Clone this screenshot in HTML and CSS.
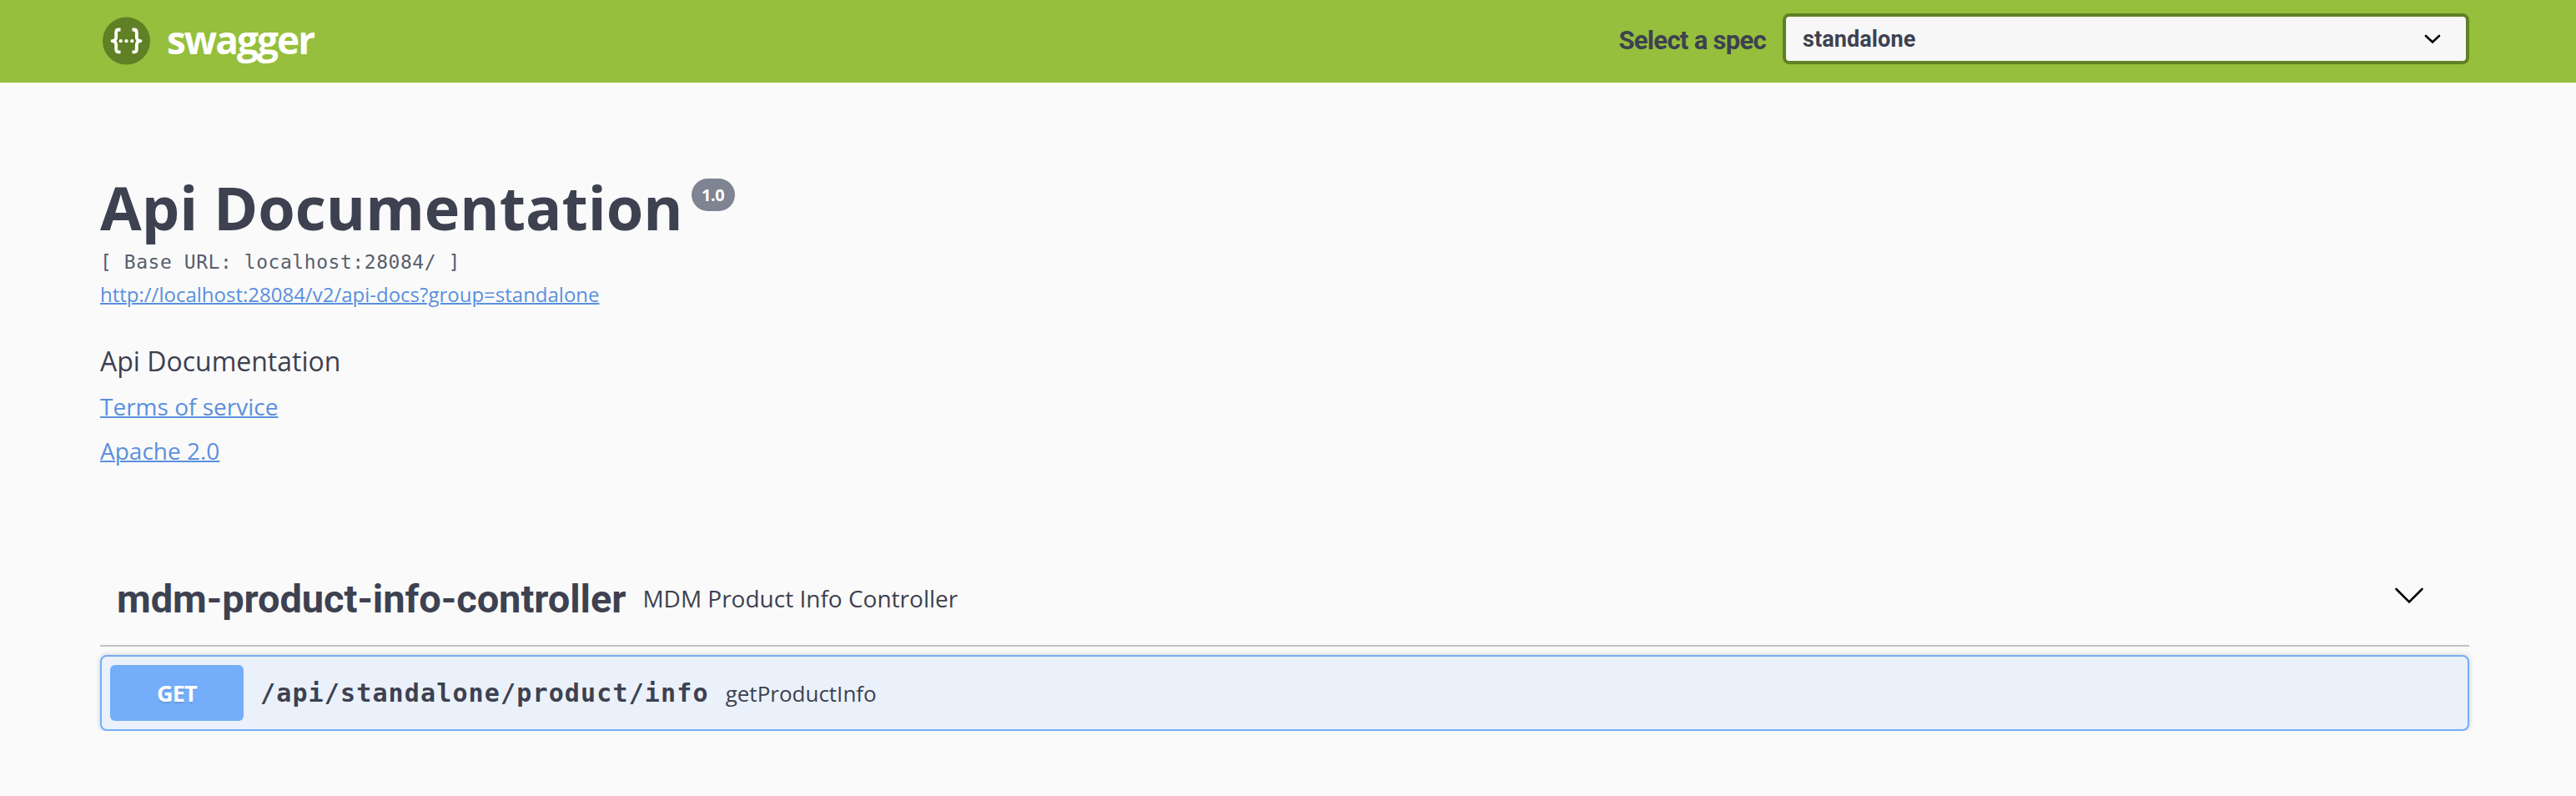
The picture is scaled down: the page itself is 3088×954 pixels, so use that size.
FILE: index.html
```
<!DOCTYPE html>
<html lang="en">
<head>
    <meta charset="utf-8">
    <title>Swagger UI</title>
    <link rel="stylesheet" href="styles.css">
</head>
<body>
    <!-- Top bar -->
    <header class="topbar">
        <a class="logo">
            <svg class="logo-icon" width="60" height="60" viewBox="0 0 60 60">
                <circle cx="31.5" cy="30" r="28.5" fill="#5f8025"/>
                <g fill="none" stroke="#fff" stroke-width="3.8" stroke-linejoin="round">
                    <path d="M24.5 16.500h-2q-3.300 0-3.300 3.500v5.500q0 4.300-4.700 4.700q4.700.400 4.700 4.700v5q0 3.500 3.300 3.500h2"/>
                    <path d="M38.5 16.500h2q3.300 0 3.300 3.500v5.500q0 4.300 4.700 4.700q-4.700.400-4.700 4.700v5q0 3.500-3.300 3.500h-2"/>
                </g>
                <g fill="#fff">
                    <circle cx="24.7" cy="30.2" r="2.1"/>
                    <circle cx="31.5" cy="30.2" r="2.1"/>
                    <circle cx="38.3" cy="30.2" r="2.1"/>
                </g>
            </svg>
            <span class="logo-text">swagger</span>
        </a>
        <label class="spec-select">
            <span class="spec-label">Select a spec</span>
            <span class="select">
                <span class="select-value">standalone</span>
                <svg width="20" height="12" viewBox="0 0 20 12"><path d="M2 2l8 7.500l8-7.500" fill="none" stroke="#000" stroke-width="2.6" stroke-linecap="round"/></svg>
            </span>
        </label>
    </header>

    <!-- Api info -->
    <section class="info">
        <h2 class="title"><span class="title-text">Api Documentation</span><span class="version">1.0</span></h2>
        <pre class="base-url">[ Base URL: localhost:28084/ ]</pre>
        <a class="link docs-link">http://localhost:28084/v2/api-docs?group=standalone</a>
        <p class="description">Api Documentation</p>
        <a class="link">Terms of service</a>
        <a class="link">Apache 2.0</a>
    </section>

    <!-- Operations -->
    <section class="tag-section">
        <div class="tag">
            <span class="tag-name">mdm-product-info-controller</span>
            <span class="tag-description">MDM Product Info Controller</span>
            <svg class="tag-arrow" width="36" height="20" viewBox="0 0 36 20"><path d="M2.500 2l15.500 15.500l15.500-15.500" fill="none" stroke="#000" stroke-width="2.6" stroke-linecap="round"/></svg>
        </div>
        <div class="opblock">
            <span class="method">GET</span>
            <span class="path">/api/standalone/product/info</span>
            <span class="summary">getProductInfo</span>
        </div>
    </section>
</body>
</html>
```
FILE: styles.css
```
body {
    margin: 0;
    background: #fafafa;
    color: #3d4150;
    font-family: "Open Sans", sans-serif;
}
.topbar {
    display: flex;
    align-items: center;
    justify-content: space-between;
    box-sizing: border-box;
    height: 99px;
    padding: 0 128px 0 120px;
    background: #95bf3c;
}
.logo {
    display: flex;
    align-items: center;
}
.logo-icon {
    display: block;
    margin-top: -2px;
}
.logo-text {
    margin: -6px 0 0 20px;
    color: #fff;
    font-size: 46px;
    font-weight: 700;
    letter-spacing: -2px;
}
.spec-select {
    display: flex;
    align-items: center;
    height: 61px;
    margin-top: -6px;
}
.spec-label {
    margin: 4px 20px 0 0;
    font-family: Roboto, sans-serif;
    font-size: 31px;
    font-weight: 700;
    letter-spacing: -.7px;
}
.select {
    display: flex;
    align-items: center;
    justify-content: space-between;
    box-sizing: border-box;
    width: 823px;
    height: 61px;
    padding: 0 30px 0 20px;
    border: 4px solid #5f8025;
    border-radius: 8px;
    background: #f7f7f7;
}
.select-value {
    font-family: Roboto, sans-serif;
    font-size: 27px;
    font-weight: 700;
    letter-spacing: .1px;
}
.info {
    display: flex;
    flex-direction: column;
    align-items: flex-start;
    padding: 100px 128px 0 120px;
}
.title {
    display: flex;
    align-items: flex-start;
    margin: 0;
    font-size: 72px;
    line-height: 98px;
}
.version {
    margin: 15px 0 0 10px;
    width: 52px;
    height: 39px;
    border-radius: 20px;
    background: #7f8492;
    color: #fff;
    font-size: 20px;
    line-height: 39px;
    letter-spacing: -.5px;
    text-align: center;
}
.base-url {
    margin: 1px 0 5px;
    color: #5a5e6b;
    font: 300 23px/32px "DejaVu Sans Mono", monospace;
    letter-spacing: .55px;
}
.link {
    margin-bottom: 15px;
    color: #5a90dd;
    font-size: 28px;
    line-height: 38px;
    text-decoration: underline;
    text-decoration-thickness: 2px;
}
.docs-link {
    margin-bottom: 40px;
    font-size: 24px;
    line-height: 36px;
}
.description {
    margin: 0 0 13px;
    font-size: 32px;
    line-height: 44px;
}
.tag-section {
    padding: 87px 128px 0 120px;
}
.tag {
    display: flex;
    align-items: center;
    height: 112px;
    padding: 0 54px 0 20px;
    border-bottom: 2px solid #c1c2c8;
}
.tag-name {
    font-family: Roboto, sans-serif;
    font-size: 47px;
    font-weight: 700;
    letter-spacing: -.06px;
}
.tag-description {
    margin-left: 20px;
    font-size: 28px;
}
.tag-arrow {
    margin: -6px 0 0 auto;
}
.opblock {
    display: flex;
    align-items: center;
    box-sizing: border-box;
    height: 91px;
    margin-top: 10px;
    padding: 0 10px;
    border: 2px solid #74adf9;
    border-radius: 8px;
    background: #eaf1fa;
    box-shadow: 0 0 6px rgba(0, 0, 0, .19);
}
.method {
    width: 160px;
    height: 67px;
    border-radius: 6px;
    background: #74adf9;
    color: #fff;
    font-size: 27px;
    font-weight: 700;
    line-height: 67px;
    letter-spacing: -.8px;
    text-align: center;
    text-shadow: 0 2px 0 rgba(0, 0, 0, .1);
}
.path {
    margin-left: 20px;
    font: 600 30px "DejaVu Sans Mono", monospace;
    letter-spacing: 1.14px;
}
.summary {
    margin-left: 20px;
    font-size: 26px;
}
```
